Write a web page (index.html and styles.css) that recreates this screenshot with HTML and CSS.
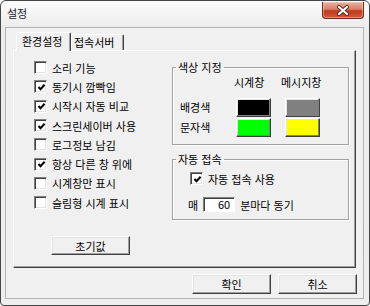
FILE: index.html
```html
<!DOCTYPE html>
<html lang="ko">
<head>
    <meta charset="UTF-8">
    <meta name="viewport" content="width=device-width, initial-scale=1.0">
    <title>설정</title>
    <link rel="stylesheet" href="styles.css">
</head>
<body>
    <div class="window">
        <div class="titlebar">
            <span class="title">설정</span>
            <button class="close-btn" title="닫기">
                <svg width="14" height="11" viewBox="0 0 14 11">
                    <path d="M3 2 L11 9 M11 2 L3 9" stroke="#5a2418" stroke-width="4" stroke-linecap="round"/>
                    <path d="M3 2 L11 9 M11 2 L3 9" stroke="#ffffff" stroke-width="2.2" stroke-linecap="round"/>
                </svg>
            </button>
        </div>

        <div class="client">
            <div class="tabs">
                <div class="tab active">환경설정</div>
                <div class="tab">접속서버</div>
            </div>

            <div class="panel">
                <div class="options">
                    <label class="option"><span class="check"></span>소리 기능</label>
                    <label class="option"><span class="check on"><svg width="9" height="9" viewBox="0 0 9 9"><path d="M1.5 4 L3.5 6.2 L7.6 1.8" fill="none" stroke="#000" stroke-width="2"/></svg></span>동기시 깜빡임</label>
                    <label class="option"><span class="check on"><svg width="9" height="9" viewBox="0 0 9 9"><path d="M1.5 4 L3.5 6.2 L7.6 1.8" fill="none" stroke="#000" stroke-width="2"/></svg></span>시작시 자동 비교</label>
                    <label class="option"><span class="check on"><svg width="9" height="9" viewBox="0 0 9 9"><path d="M1.5 4 L3.5 6.2 L7.6 1.8" fill="none" stroke="#000" stroke-width="2"/></svg></span>스크린세이버 사용</label>
                    <label class="option"><span class="check"></span>로그정보 남김</label>
                    <label class="option"><span class="check on"><svg width="9" height="9" viewBox="0 0 9 9"><path d="M1.5 4 L3.5 6.2 L7.6 1.8" fill="none" stroke="#000" stroke-width="2"/></svg></span>항상 다른 창 위에</label>
                    <label class="option"><span class="check"></span>시계창만 표시</label>
                    <label class="option"><span class="check"></span>슬림형 시계 표시</label>
                    <button class="btn reset-btn">초기값</button>
                </div>

                <div class="side">
                    <fieldset class="group color-group">
                        <legend>색상 지정</legend>
                        <div class="color-grid">
                            <span></span>
                            <span class="col-head">시계창</span>
                            <span class="col-head wide">메시지창</span>
                            <span class="row-label">배경색</span>
                            <span class="swatch black"></span>
                            <span class="swatch gray"></span>
                            <span class="row-label">문자색</span>
                            <span class="swatch green"></span>
                            <span class="swatch yellow"></span>
                        </div>
                    </fieldset>

                    <fieldset class="group auto-group">
                        <legend>자동 접속</legend>
                        <label class="option"><span class="check on"><svg width="9" height="9" viewBox="0 0 9 9"><path d="M1.5 4 L3.5 6.2 L7.6 1.8" fill="none" stroke="#000" stroke-width="2"/></svg></span>자동 접속 사용</label>
                        <div class="sync-row">
                            <span>매</span>
                            <span class="num-input">60</span>
                            <span>분마다 동기</span>
                        </div>
                    </fieldset>
                </div>
            </div>

            <div class="footer">
                <button class="btn">확인</button>
                <button class="btn">취소</button>
            </div>
        </div>
    </div>
</body>
</html>
```

FILE: styles.css
```css
* {
    margin: 0;
    padding: 0;
    box-sizing: border-box;
}

body {
    font-family: 'Noto Sans CJK KR', 'Liberation Sans', sans-serif;
    font-size: 11px;
    color: #000;
    background: #fff;
}

.window {
    width: 370px;
    height: 306px;
    border: 1px solid #454545;
    border-radius: 6px 6px 4px 4px;
    background: linear-gradient(#fcfcfc, #ececec 26px, #eeeeee);
    padding: 0 5px 6px 4px;
    display: flex;
    flex-direction: column;
    overflow: hidden;
}

/* 제목 표시줄 */
.titlebar {
    height: 26px;
    display: flex;
    justify-content: space-between;
    align-items: flex-start;
}

.title {
    margin: 5px 0 0 2px;
    line-height: 15px;
    color: #1a1a1a;
}

.close-btn {
    width: 42px;
    height: 17px;
    margin-top: 1px;
    border: 1px solid #6e2b1f;
    border-top: none;
    border-radius: 0 0 4px 4px;
    background: linear-gradient(#e9b2a2 0%, #d98068 45%, #c0391f 55%, #d2583b 100%);
    box-shadow: inset 0 0 0 1px rgba(255, 220, 200, 0.45);
    display: flex;
    justify-content: center;
    align-items: center;
}

/* 창 내부 */
.client {
    flex: 1;
    border: 1px solid #b2b2b2;
    background: #f0f0f0;
    padding: 4px 7px 4px 7px;
    display: flex;
    flex-direction: column;
}

.tabs {
    display: flex;
    align-items: flex-end;
    height: 18px;
    padding-left: 3px;
}

.tab {
    height: 16px;
    line-height: 15px;
    background: #f0f0f0;
    border-top: 1px solid #fff;
    border-left: 1px solid #fff;
    border-right: 1px solid #404040;
    box-shadow: inset -1px 0 0 #a0a0a0;
    border-radius: 2px 2px 0 0;
    width: 53px;
    padding-left: 2px;
}

.tab.active {
    position: relative;
    z-index: 1;
    height: 19px;
    margin-bottom: -1px;
    width: 55px;
    padding-left: 5px;
    line-height: 17px;
}

.panel {
    height: 218px;
    border-top: 1px solid #fff;
    border-left: 1px solid #fff;
    border-right: 1px solid #404040;
    border-bottom: 1px solid #404040;
    box-shadow: inset -1px -1px 0 #a0a0a0;
    padding: 7px 6px 0 20px;
    display: flex;
}

/* 왼쪽 옵션 */
.options {
    width: 138px;
    display: flex;
    flex-direction: column;
    align-items: flex-start;
}

.option {
    height: 19.3px;
    display: flex;
    align-items: center;
    gap: 5px;
    white-space: nowrap;
}

.check {
    width: 13px;
    height: 13px;
    background: #fff;
    border: 1px solid;
    border-color: #808080 #fff #fff #808080;
    box-shadow: inset 1px 1px 0 #404040, inset -1px -1px 0 #e3e3e3;
    display: flex;
    justify-content: center;
    align-items: center;
    padding: 1px 0 0 1px;
}

.btn {
    font: inherit;
    color: #000;
    width: 79px;
    height: 20px;
    background: #f0f0f0;
    border: 1px solid;
    border-color: #fff #404040 #404040 #fff;
    box-shadow: inset -1px -1px 0 #a0a0a0, inset 1px 1px 0 #e3e3e3;
}

.reset-btn {
    margin: 24px 0 0 17px;
    height: 19px;
}

/* 오른쪽 그룹 */
.side {
    width: 177px;
    padding-top: 2px;
}

.group {
    border: 1px solid #a0a0a0;
    box-shadow: inset 1px 1px 0 #fff, 1px 1px 0 #fff;
    min-width: 0;
}

.group legend {
    line-height: 14px;
    padding: 0 2px;
}

.color-group {
    padding: 0 0 7px 7px;
}

.color-group legend {
    margin-left: -4px;
}

.color-grid {
    display: grid;
    grid-template-columns: 42px 35px 35px;
    grid-template-rows: 23px 19px 19px;
    column-gap: 14px;
    row-gap: 1px;
}

.col-head {
    line-height: 16px;
    margin-left: -2px;
    white-space: nowrap;
}

.col-head.wide {
    margin-left: -4px;
}

.row-label {
    line-height: 19px;
}

.swatch {
    border: 1px solid;
    border-color: #fff #404040 #404040 #fff;
    box-shadow: inset -1px -1px 0 #808080, inset 1px 1px 0 #e3e3e3;
}

.swatch.black { background: #000; }
.swatch.gray { background: #808080; }
.swatch.green { background: #00ff00; }
.swatch.yellow { background: #ffff00; }

.auto-group {
    margin-top: 7px;
    padding: 3px 0 5px 15px;
}

.auto-group legend {
    margin-left: -12px;
}

.auto-group .option {
    height: 19px;
    margin-left: 2px;
}

.sync-row {
    height: 19px;
    margin-top: 7px;
    display: flex;
    align-items: center;
    gap: 5px;
}

.num-input {
    width: 32px;
    height: 15px;
    line-height: 12px;
    background: #fff;
    border: 1px solid;
    border-color: #808080 #fff #fff #808080;
    box-shadow: inset 1px 1px 0 #404040;
    text-align: right;
    padding-right: 4px;
}

/* 하단 버튼 */
.footer {
    margin: 6px -1px 0 0;
    display: flex;
    justify-content: flex-end;
    gap: 7px;
}
```
